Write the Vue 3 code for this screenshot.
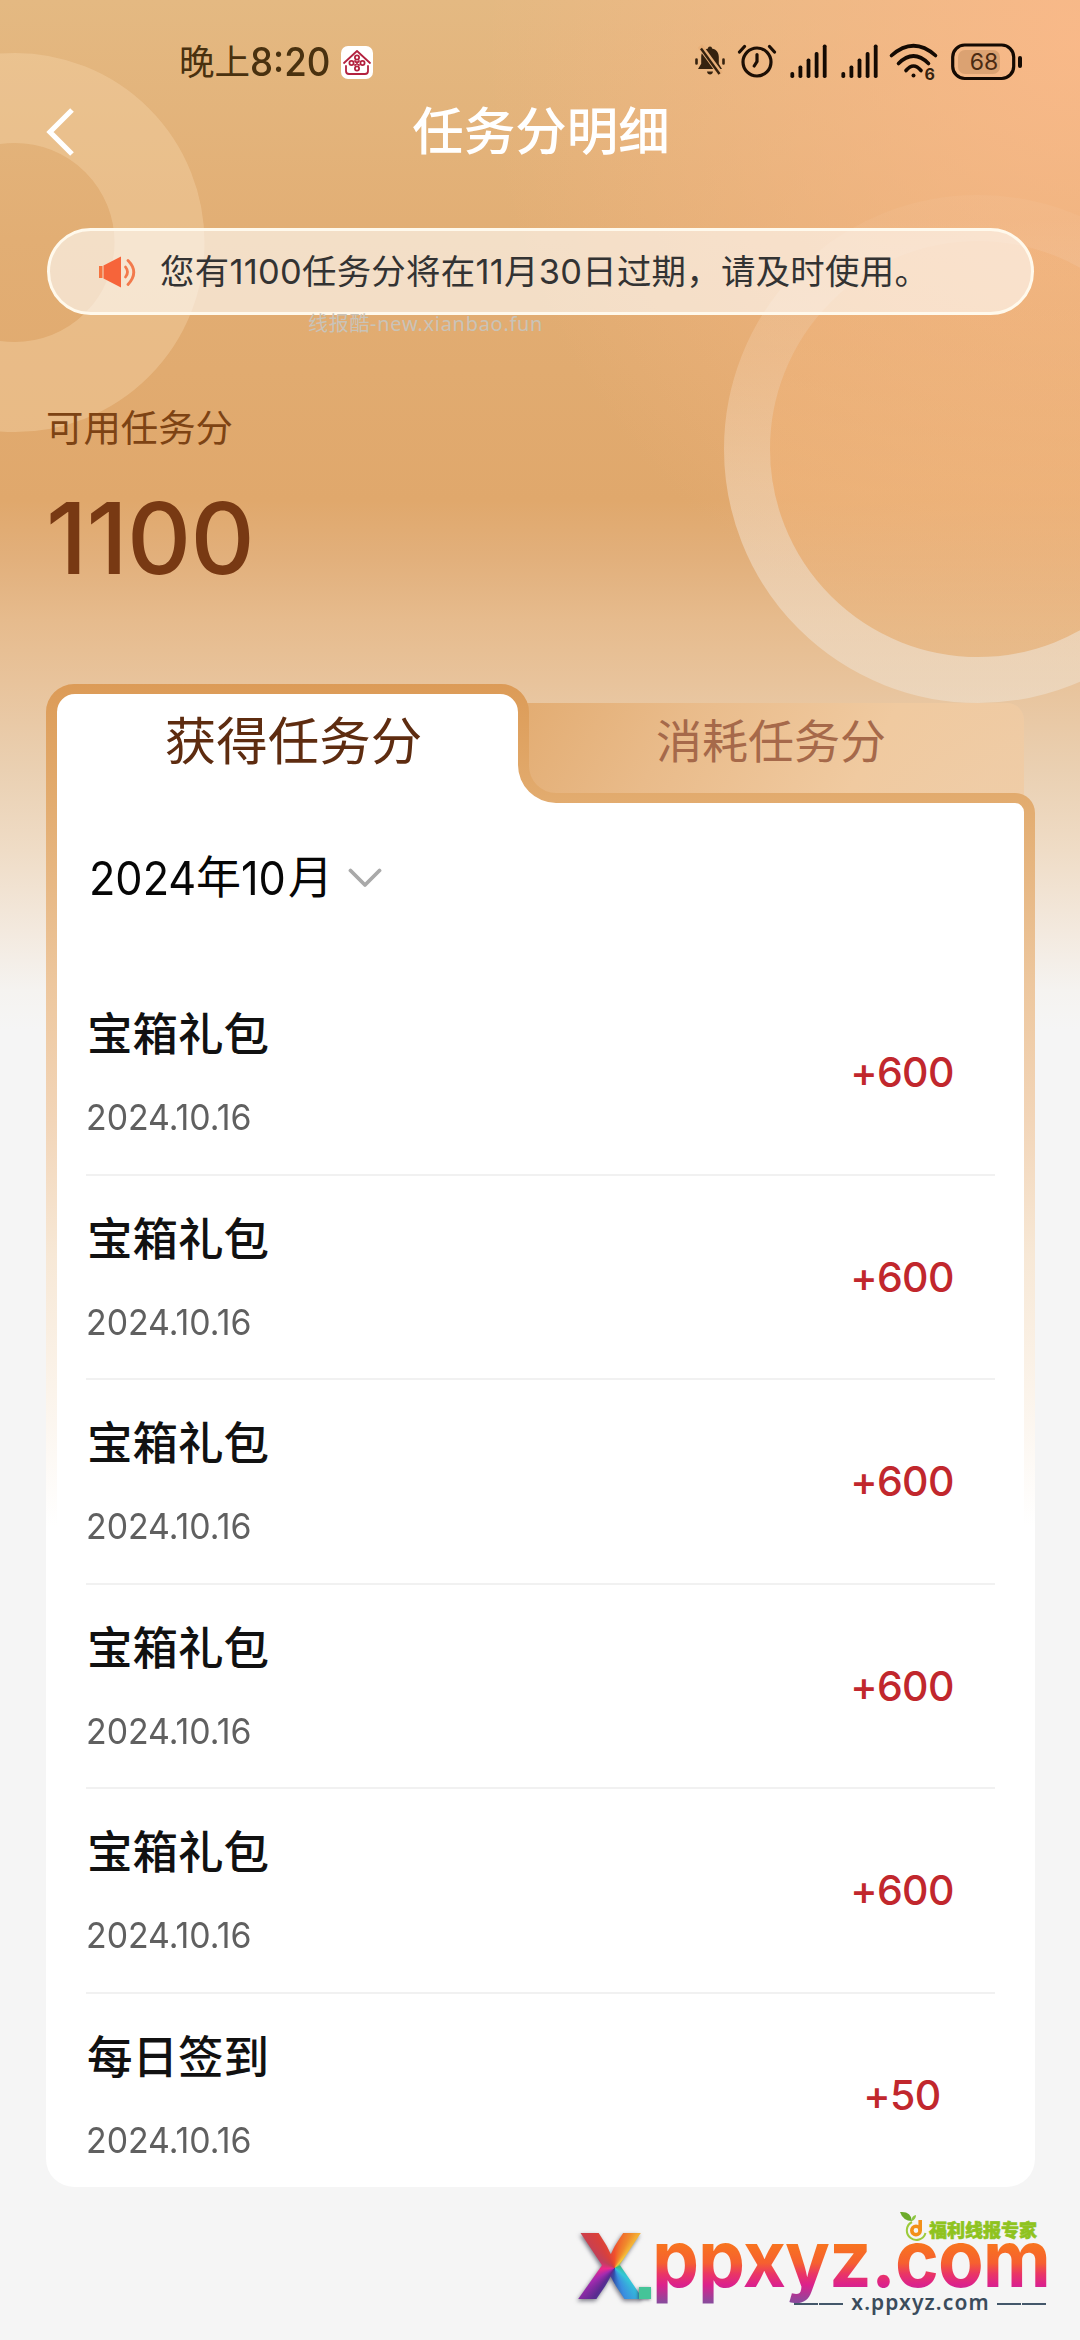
<script setup>
const records = [
  { title: '宝箱礼包', date: '2024.10.16', points: '+600' },
  { title: '宝箱礼包', date: '2024.10.16', points: '+600' },
  { title: '宝箱礼包', date: '2024.10.16', points: '+600' },
  { title: '宝箱礼包', date: '2024.10.16', points: '+600' },
  { title: '宝箱礼包', date: '2024.10.16', points: '+600' },
  { title: '每日签到', date: '2024.10.16', points: '+50' },
]
const bars = [6, 12.5, 19.5, 26, 33.5]
</script>

<template>
  <div class="page">
    <svg class="backdrop" width="1080" height="760" viewBox="0 0 1080 760">
      <defs>
        <linearGradient id="ringFade" x1="0" y1="0" x2="0" y2="1">
          <stop offset="0" stop-color="#fff" stop-opacity="0.04" />
          <stop offset="0.3" stop-color="#ffeee0" stop-opacity="0.2" />
          <stop offset="0.6" stop-color="#fff" stop-opacity="0.32" />
          <stop offset="1" stop-color="#f0e8dc" stop-opacity="0.46" />
        </linearGradient>
        <linearGradient id="discFade" x1="0" y1="0" x2="0" y2="1">
          <stop offset="0" stop-color="#f2b67e" stop-opacity="0.2" />
          <stop offset="0.6" stop-color="#f6ba82" stop-opacity="0.45" />
          <stop offset="1" stop-color="#e8b47c" stop-opacity="0.45" />
        </linearGradient>
      </defs>
      <circle cx="15" cy="242.5" r="144.5" fill="none" stroke="#f6d4aa" stroke-opacity="0.4" stroke-width="90" />
      <circle cx="978" cy="449" r="208" fill="url(#discFade)" />
      <circle cx="978" cy="449" r="231" fill="none" stroke="url(#ringFade)" stroke-width="46" />
    </svg>

    <header class="status">
      <div class="clock">
        <span class="clock-cn">晚上</span><span class="clock-num">8:20</span>
        <svg class="app-badge" width="32" height="33" viewBox="0 0 32 33">
          <rect width="32" height="33" rx="7" fill="#fff" />
          <g fill="none" stroke="#b3213f" stroke-width="1.8" stroke-linecap="round" stroke-linejoin="round">
            <path d="M3 17 L16 5 L29 17" />
            <path d="M5 20 V25 Q5 28 8 28 H24 Q27 28 27 25 V20" />
            <circle cx="16" cy="11.5" r="2.1" /><circle cx="16" cy="22.5" r="2.1" />
            <circle cx="10.5" cy="17" r="2.1" /><circle cx="21.5" cy="17" r="2.1" />
            <path d="M14 15 L18 19 M18 15 L14 19" />
          </g>
        </svg>
      </div>
      <div class="indicators">
        <svg width="30" height="36" viewBox="0 0 30 36" fill="#35220f">
          <path d="M1.5 16.5v4M28.5 16.5v4" stroke="#35220f" stroke-width="2.6" stroke-linecap="round" />
          <path d="M15 3.5c1.4 0 2 .9 2 1.9 4.6.8 6.8 4.2 6.8 8.5v6.8l3.2 5.3H3l3.2-5.3v-6.8c0-4.300 2.200-7.700 6.800-8.500 0-1 .6-1.900 2-1.900z" />
          <path d="M12 28.500h6c-.3 2-1.300 3-3 3s-2.700-1-3-3z" />
          <path d="M5 3 L25.500 31" stroke="#e9b079" stroke-width="5.600" />
          <path d="M6 5.500 L24.500 31" stroke="#35220f" stroke-width="2.400" />
        </svg>
        <svg width="40" height="36" viewBox="0 0 40 36" fill="none" stroke="#1c0f05" stroke-width="3.200" stroke-linecap="round">
          <circle cx="20" cy="19" r="14" />
          <path d="M20 11.500v7l-2.800 4.500M2.500 9l5-5.500M37.500 9l-5-5.500" />
        </svg>
        <svg v-for="n in 2" :key="n" width="37" height="36" viewBox="0 0 37 36" fill="#140a03">
          <rect v-for="(h, i) in bars" :key="i" :x="0.4 + i * 8.1" :y="35 - h" width="3.800" :height="h" rx="1.700" />
        </svg>
        <svg class="wifi" width="50" height="44" viewBox="0 0 50 44" fill="none" stroke="#140a03" stroke-width="3.600" stroke-linecap="round">
          <path d="M2.500 12.500 Q24.500 -7 46.500 12.500M9.500 20.500 Q24.500 5.500 39.500 20.500M17 27.500 Q24.500 18.500 32 27.500" />
          <circle cx="24.500" cy="32.500" r="2" fill="#140a03" stroke="none" />
          <text x="35.500" y="36.500" class="wifi-gen">6</text>
        </svg>
        <svg width="72" height="38" viewBox="0 0 72 38">
          <rect x="7" y="7" width="42" height="24" rx="7" fill="#dba272" />
          <rect x="1.700" y="2" width="61" height="33.500" rx="12" fill="none" stroke="#140a03" stroke-width="3.200" />
          <rect x="67" y="13" width="4" height="12" rx="2" fill="#140a03" />
          <text x="33" y="27" class="battery-level">68</text>
        </svg>
      </div>
    </header>

    <nav class="titlebar">
      <svg width="30" height="50" viewBox="0 0 30 50" fill="none" stroke="#fff" stroke-width="5.200">
        <path d="M26 3 L4 25 L26 47" />
      </svg>
      <h1>任务分明细</h1>
    </nav>

    <section class="notice">
      <svg width="37" height="32" viewBox="0 0 37 32">
        <path d="M0 10h3.500v12H0z" fill="#f5733f" />
        <path d="M4.500 9.500 L22 .5 V31.500 L4.500 22.500z" fill="#f6643a" />
        <g fill="none" stroke="#f27a4c" stroke-width="2.800" stroke-linecap="round">
          <path d="M26.500 11 Q30.500 16 26.500 21" />
          <path d="M29 4.500 Q40.500 16 29 28.500" />
        </g>
      </svg>
      <span>您有1100任务分将在11月30日过期，请及时使用。</span>
    </section>
    <div class="watermark">线报酷-new.xianbao.fun</div>

    <section class="balance">
      <div class="balance-label">可用任务分</div>
      <div class="balance-value">1100</div>
    </section>

    <main class="card">
      <svg class="card-shape" width="989" height="1503" viewBox="0 0 989 1503">
        <defs>
          <linearGradient id="frame" gradientUnits="userSpaceOnUse" x1="0" y1="0" x2="0" y2="1503">
            <stop offset="0" stop-color="#dc9b57" />
            <stop offset="0.075" stop-color="#e2ab6e" />
            <stop offset="0.2" stop-color="#edc79e" />
            <stop offset="0.29" stop-color="#f2d5b8" />
            <stop offset="0.38" stop-color="#f7e8d6" />
            <stop offset="0.56" stop-color="#ffffff" />
            <stop offset="1" stop-color="#ffffff" />
          </linearGradient>
          <linearGradient id="idleTab" x1="0" y1="0" x2="1" y2="0.12">
            <stop offset="0" stop-color="#e2ab70" />
            <stop offset="0.35" stop-color="#e9bb8a" />
            <stop offset="0.75" stop-color="#f0caa0" />
            <stop offset="1" stop-color="#f0cba3" stop-opacity="0.85" />
          </linearGradient>
        </defs>
        <path d="M460 19H961a17 17 0 0 1 17 17V125H460z" fill="url(#idleTab)" />
        <path
          d="M28 0H455a28 28 0 0 1 28 28V82a27 27 0 0 0 27 27H969a20 20 0 0 1 20 20V1475a28 28 0 0 1-28 28H28a28 28 0 0 1-28-28V28a28 28 0 0 1 28-28z"
          fill="url(#frame)"
        />
        <path
          d="M29 10H454a18 18 0 0 1 18 18V81a38 38 0 0 0 38 38H969a9 9 0 0 1 9 9V1485H11V28a18 18 0 0 1 18-18z"
          fill="#fff"
        />
      </svg>

      <div class="tabs">
        <div class="tab active">获得任务分</div>
        <div class="tab idle">消耗任务分</div>
      </div>

      <div class="month">
        <span class="num year">2024</span><span class="unit">年</span><span class="num mon">10</span><span class="unit">月</span>
        <svg width="34" height="20" viewBox="0 0 34 20" fill="none" stroke="#a9a9a9" stroke-width="3.800" stroke-linecap="round" stroke-linejoin="round">
          <path d="M2.500 2.500 L17 17 L31.500 2.500" />
        </svg>
      </div>

      <ul class="records">
        <li v-for="(r, i) in records" :key="i">
          <div class="info">
            <div class="name">{{ r.title }}</div>
            <div class="date"><span>{{ r.date }}</span></div>
          </div>
          <div class="points">{{ r.points }}</div>
        </li>
      </ul>
    </main>

    <footer class="brand">
      <div class="brand-x">X</div>
      <div class="brand-dot"></div>
      <div class="brand-name">ppxyz.com</div>
      <div class="brand-tag">
        <svg width="27" height="31" viewBox="0 0 27 31">
          <path d="M0 1 Q11 0 12 10 Q3 10 0 1z" fill="#6cab2a" />
          <path d="M12 10 Q11 5 16 4 Q16 8 12 10z" fill="#8cc63f" />
          <path d="M12 11 A9.500 9.500 0 1 0 25.500 22" fill="none" stroke="#9ccb3b" stroke-width="2" />
          <circle cx="16" cy="19.500" r="4.200" fill="none" stroke="#f39019" stroke-width="3.600" />
          <path d="M20.200 9v11" stroke="#f39019" stroke-width="3.600" />
        </svg>
        <span>福利线报专家</span>
      </div>
      <div class="brand-url"><i></i><i></i><span>x.ppxyz.com</span><i></i><i></i></div>
    </footer>
  </div>
</template>

<style>
body {
  margin: 0;
}
</style>

<style scoped>
.page {
  position: relative;
  box-sizing: border-box;
  width: 1080px;
  height: 2340px;
  overflow: hidden;
  font-family: 'Noto Sans CJK SC', 'Noto Sans', sans-serif;
  background:
    radial-gradient(ellipse 600px 620px at 1080px 40px, rgba(252, 185, 138, 0.85), rgba(250, 184, 134, 0) 100%),
    linear-gradient(180deg, #e4b982 0, #e2ae74 240px, #e0a86c 500px, #e2b07c 560px, #e6bb8d 620px, #e8c39b 680px, #ead0b2 770px, #efdcc6 850px, #f3e9de 930px, #f5f3f0 990px, #f5f5f5 1030px);
}
.backdrop {
  position: absolute;
  left: 0;
  top: 0;
}
.status {
  position: relative;
  display: flex;
  justify-content: space-between;
  height: 84px;
  padding: 40px 57px 0 179px;
  box-sizing: border-box;
}
.clock {
  display: flex;
  align-items: center;
  height: 44px;
  color: #49310f;
}
.clock-cn {
  font-size: 35.5px;
  line-height: 40px;
  margin-top: -4px;
}
.clock-num {
  width: 91px;
  font: 500 39px/44px Inter, sans-serif;
  transform: scaleX(0.94);
  transform-origin: 0 50%;
}
.indicators {
  display: flex;
  align-items: flex-start;
  padding-top: 3px;
}
.indicators svg:nth-child(2) { margin-left: 12px; }
.indicators svg:nth-child(3) { margin-left: 13px; }
.indicators svg:nth-child(4) { margin-left: 14px; }
.indicators svg:nth-child(5) { margin-left: 11px; }
.indicators svg:nth-child(6) { margin-left: 12px; }
.wifi {
  overflow: visible;
}
.wifi-gen {
  font: 700 16px Inter, sans-serif;
  fill: #35220f;
  stroke: none;
}
.battery-level {
  font: 400 23px Inter, sans-serif;
  fill: #4a2a12;
  text-anchor: middle;
}
.titlebar {
  position: relative;
  display: flex;
  align-items: center;
  height: 96px;
  padding: 0 46px;
}
.titlebar h1 {
  flex: 1;
  margin: -9px 28px 0 0;
  font-size: 51.5px;
  line-height: 76px;
  font-weight: 500;
  text-align: center;
  color: #fff;
}
.notice {
  position: relative;
  display: flex;
  align-items: center;
  box-sizing: border-box;
  width: 987px;
  height: 87px;
  margin: 48px 0 0 47px;
  padding-left: 49px;
  border: 3px solid #fff9ec;
  border-radius: 44px;
  background: rgba(255, 255, 255, 0.6);
}
.notice span {
  margin-left: 24px;
  font-family: Inter, 'Noto Sans CJK SC', sans-serif;
  font-size: 34.4px;
  line-height: 50px;
  letter-spacing: 0.3px;
  color: #333;
  white-space: nowrap;
}
.watermark {
  position: relative;
  height: 21px;
  margin-left: 308px;
  font-family: 'Noto Sans', 'Noto Sans CJK SC', sans-serif;
  font-size: 20px;
  line-height: 18px;
  letter-spacing: 0.7px;
  color: #c9c3b8;
}
.balance {
  position: relative;
  height: 348px;
  padding: 64px 0 0 46px;
  box-sizing: border-box;
}
.balance-label {
  font-size: 37.4px;
  line-height: 52px;
  color: #7d4314;
}
.balance-value {
  margin-top: 36px;
  font: 500 99.5px/100px Inter, sans-serif;
  letter-spacing: -0.8px;
  color: #783913;
}
.card {
  position: relative;
  width: 989px;
  height: 1503px;
  margin-left: 46px;
}
.card-shape {
  position: absolute;
  left: 0;
  top: 0;
}
.tabs {
  position: relative;
  display: flex;
  height: 112px;
}
.tab {
  line-height: 76px;
  padding-top: 16px;
  text-align: center;
}
.active {
  width: 495px;
  font-size: 51.5px;
  color: #5e2c10;
}
.idle {
  width: 460px;
  font-size: 46px;
  color: #a6694a;
}
.month {
  position: relative;
  display: flex;
  align-items: center;
  height: 50px;
  margin: 57px 0 0 43px;
  font-size: 45px;
  line-height: 50px;
  color: #060606;
}
.month svg {
  margin-left: 15px;
}
.unit {
  margin-top: -6px;
}
.num {
  display: block;
  font: 400 47px/50px Inter, sans-serif;
  transform: scaleX(0.92);
  transform-origin: 0 50%;
}
.year { width: 107px; }
.mon { width: 47px; }
.records {
  position: relative;
  list-style: none;
  margin: 68px 40px 0;
  padding: 0;
}
.records li {
  display: flex;
  align-items: center;
  box-sizing: border-box;
  height: 204.5px;
  border-bottom: 2.5px solid #f1f1f1;
}
.records li:last-child {
  border-bottom-color: transparent;
}
.info {
  flex: 1;
}
.name {
  margin-top: -1px;
  padding-left: 1px;
  font-size: 45.5px;
  line-height: 60px;
  font-weight: 500;
  color: #111;
}
.date {
  margin-top: 31px;
  height: 50px;
}
.date span {
  display: inline-block;
  font: 400 35.8px/50px Inter, sans-serif;
  color: #606060;
  transform: scaleX(0.945);
  transform-origin: 0 50%;
}
.points {
  width: 186px;
  text-align: center;
  font: 500 41px/60px Inter, sans-serif;
  letter-spacing: -0.6px;
  color: #c1272d;
}
.brand {
  position: absolute;
  left: 578px;
  top: 2205px;
  width: 470px;
  height: 120px;
}
.brand-x,
.brand-dot,
.brand-name,
.brand-tag,
.brand-url {
  position: absolute;
}
.brand-x {
  left: -2px;
  top: 11px;
  font: 800 91px/100px Inter, sans-serif;
  color: transparent;
  background: conic-gradient(from 0deg at 56% 52%, #f04f2c 0deg, #f08a2c 25deg, #f6c83c 42deg, #39b980 70deg, #34c6d8 130deg, #3a8fe0 160deg, #2f4fa8 185deg, #5a2a90 215deg, #a52bb0 240deg, #ee2a8c 265deg, #c0405c 300deg, #d8403c 330deg, #f04f2c 360deg);
  -webkit-background-clip: text;
  background-clip: text;
  filter: drop-shadow(-1px 2px 2px rgba(40, 40, 60, 0.6));
}
.brand-dot {
  left: 61px;
  top: 82px;
  width: 12px;
  height: 12px;
  background: #45c498;
  box-shadow: -1px 1px 3px rgba(40, 40, 60, 0.6);
}
.brand-name {
  left: 74px;
  top: 13px;
  font: 700 79px/80px Inter, sans-serif;
  letter-spacing: -1px;
  padding-bottom: 12px;
  color: transparent;
  background: linear-gradient(180deg, #f8741f 26px, #f6602f 45px, #ea3566 56px, #dc218c 67px, #8a4a9c 84px);
  -webkit-background-clip: text;
  background-clip: text;
  transform: scaleX(0.945);
  transform-origin: 0 0;
}
.brand-tag {
  left: 322px;
  top: 6px;
  display: flex;
}
.brand-tag span {
  height: 30px;
  margin: -5px 0 0 2px;
  padding-top: 5px;
  font-size: 18px;
  line-height: 36px;
  font-weight: 900;
  color: #8fc31f;
  -webkit-text-stroke: 0.6px #8fc31f;
}
.brand-url {
  left: 216px;
  top: 84px;
  display: flex;
  align-items: center;
  width: 253px;
  height: 30px;
}
.brand-url i {
  width: 24px;
  height: 2px;
  margin-right: 1px;
  background: #43576a;
}
.brand-url span {
  flex: 1;
  margin-top: -5px;
  text-align: center;
  font: 600 21px/28px 'Noto Sans', sans-serif;
  letter-spacing: 1.1px;
  color: #3b4c5c;
}
</style>
